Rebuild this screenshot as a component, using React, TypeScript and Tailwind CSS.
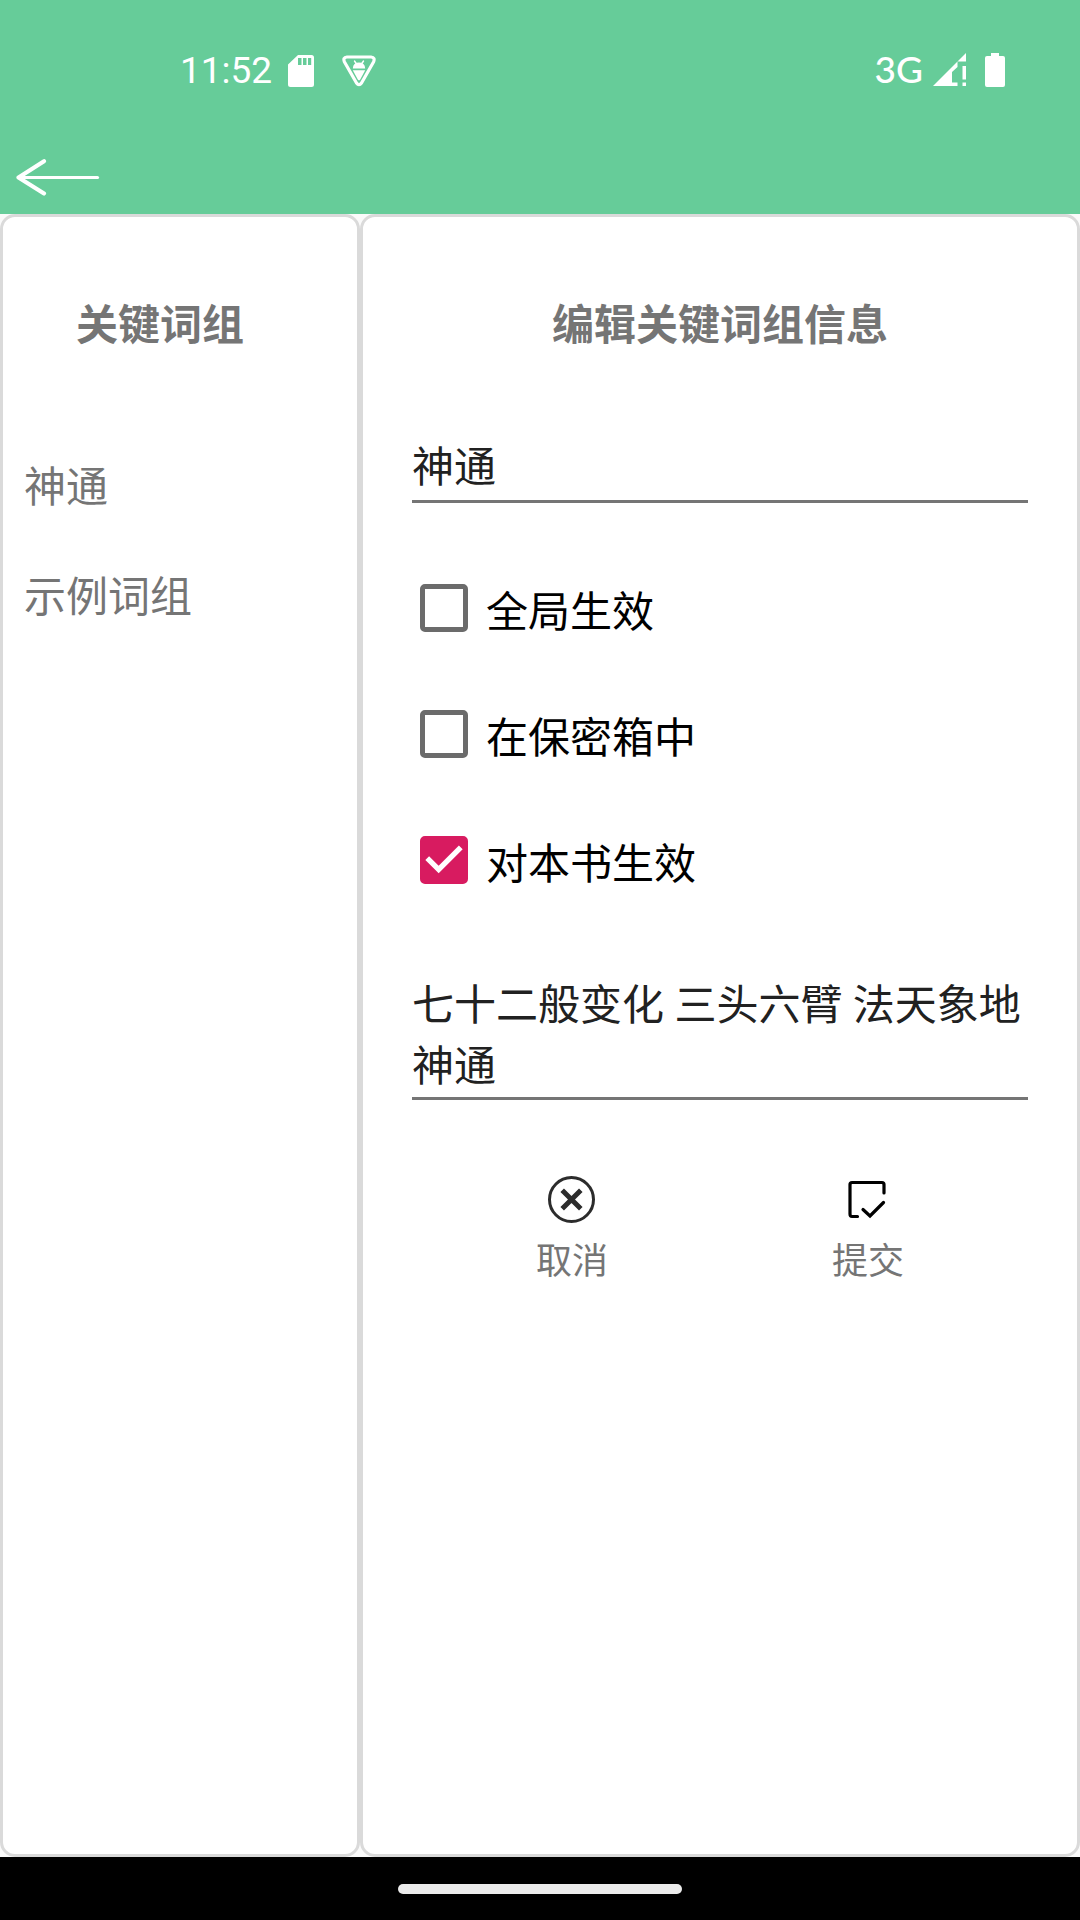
import { useState } from "react";

interface CheckRowProps {
    id: string;
    label: string;
    checked: boolean;
    onChange: (checked: boolean) => void;
}

function SdCardIcon() {
    return (
        <svg width="26" height="32" viewBox="0 0 26 32" fill="white" aria-hidden="true">
            <path
                fillRule="evenodd"
                d="M10 0H23.5A2.5 2.5 0 0 1 26 2.5V29.5A2.5 2.5 0 0 1 23.5 32H2.5A2.5 2.5 0 0 1 0 29.5V9.5ZM10 3V10H13.5V3ZM15 3V10H18.5V3ZM20 3V10H23.2V3Z"
            />
        </svg>
    );
}

function DebugIcon() {
    return (
        <svg width="34" height="32" viewBox="0 0 34 32" fill="none" aria-hidden="true">
            <path
                d="M5 2H29Q33.5 2.5 31.5 7L19.5 28Q17 31.5 14.5 28L2.5 7Q0.5 2.5 5 2Z"
                stroke="white"
                strokeWidth="3.2"
                strokeLinejoin="round"
            />
            <path
                d="M12.5 6L14.5 9M21.5 6L19.5 9"
                stroke="white"
                strokeWidth="1.4"
                strokeLinecap="round"
            />
            <path d="M10.8 13.4Q11.2 7.5 17 7.5T23.2 13.4ZM10.8 15.2H23.2L18.2 24.5Q17 26.2 15.8 24.5Z" fill="white" />
        </svg>
    );
}

function SignalIcon() {
    return (
        <svg width="34" height="34" viewBox="0 0 34 34" fill="white" aria-hidden="true">
            <path d="M33 0V8.5H24.5V14L19 19V29.5H24.5V33H0Z" />
            <path d="M29.5 13H33V26.5H29.5ZM29.5 29.5H33V33H29.5Z" />
        </svg>
    );
}

function BatteryIcon() {
    return (
        <svg width="20" height="34" viewBox="0 0 20 34" fill="white" aria-hidden="true">
            <path d="M6 0H14V3H18Q20 3 20 5V32Q20 34 18 34H2Q0 34 0 32V5Q0 3 2 3H6Z" />
        </svg>
    );
}

function BackIcon() {
    return (
        <svg width="84" height="38" viewBox="0 0 84 38" fill="none" stroke="white" strokeLinecap="round" aria-hidden="true">
            <path d="M5 19.5H81.5" strokeWidth="3.2" />
            <path d="M28 3.2L2.5 19.5L28 35.5" strokeWidth="4.2" strokeLinejoin="round" />
        </svg>
    );
}

function CancelIcon() {
    return (
        <svg width="48" height="48" viewBox="0 0 48 48" fill="none" stroke="#2c2c2c" aria-hidden="true">
            <circle cx="23.5" cy="23.5" r="22" strokeWidth="3" />
            <path d="M14.2 14.2L32.8 32.8M32.8 14.2L14.2 32.8" strokeWidth="5" />
        </svg>
    );
}

function SubmitIcon() {
    return (
        <svg width="48" height="48" viewBox="0 0 48 48" fill="none" stroke="black" strokeWidth="3.2" strokeLinecap="round" aria-hidden="true">
            <path d="M40 17V8.5Q40 6.5 38 6.5H8Q6 6.5 6 8.5V38Q6 40.5 8 40.5H13.5" />
            <path d="M19 33.5L26 40L39.5 26.5" />
        </svg>
    );
}

function CheckRow({ id, label, checked, onChange }: CheckRowProps) {
    return (
        <div className="flex items-center h-[126px] pl-2 gap-[18px]">
            <span className="grid shrink-0">
                <input
                    id={id}
                    type="checkbox"
                    checked={checked}
                    onChange={(e) => onChange(e.target.checked)}
                    className="peer col-start-1 row-start-1 appearance-none w-12 h-12 rounded-[5px] border-[5px] border-[#6b6b6b] checked:border-[#d81b60] checked:bg-[#d81b60]"
                />
                <svg
                    viewBox="3 3 18 18"
                    className="col-start-1 row-start-1 w-12 h-12 fill-white pointer-events-none invisible peer-checked:visible"
                    aria-hidden="true"
                >
                    <path d="M10 17l-5-5 1.41-1.41L10 14.17l7.59-7.59L19 8l-9 9z" />
                </svg>
            </span>
            <label htmlFor={id} className="pt-2.5 text-black">
                {label}
            </label>
        </div>
    );
}

const groups = ["神通", "示例词组"];

export default function App() {
    const [name, setName] = useState("神通");
    const [words, setWords] = useState("七十二般变化 三头六臂 法天象地 神通");
    const [isGlobal, setIsGlobal] = useState(false);
    const [inVault, setInVault] = useState(false);
    const [forBook, setForBook] = useState(true);

    return (
        <div className="min-h-screen flex flex-col bg-[#fafafa] font-[Roboto,'Noto_Sans_CJK_SC',sans-serif] text-[42px] leading-[60px] text-[#757575]">
            <header className="bg-[#66cc99] text-white">
                <div className="flex items-center justify-between h-[140px] pl-[180px] pr-[75px] text-[37px]">
                    <div className="flex items-center pt-0.5">
                        <span>11:52</span>
                        <span className="ml-4">
                            <SdCardIcon />
                        </span>
                        <span className="ml-7">
                            <DebugIcon />
                        </span>
                    </div>
                    <div className="flex items-center">
                        <span className="pb-0.5 font-medium font-[Lato,sans-serif]">3G</span>
                        <span className="ml-2.5">
                            <SignalIcon />
                        </span>
                        <span className="ml-[18px]">
                            <BatteryIcon />
                        </span>
                    </div>
                </div>
                <div className="flex items-center h-[74px] pl-4">
                    <button type="button" aria-label="返回">
                        <BackIcon />
                    </button>
                </div>
            </header>

            <main className="flex-1 flex">
                <nav className="w-1/3 bg-white border-[3px] border-[#dadada] rounded-[15px] pt-[79px]">
                    <h2 className="mr-10 text-center font-bold">关键词组</h2>
                    <ul className="mt-[77px] px-[21px]">
                        {groups.map((group) => (
                            <li key={group}>
                                <button type="button" className="w-full h-[110px] text-left">
                                    {group}
                                </button>
                            </li>
                        ))}
                    </ul>
                </nav>

                <form
                    onSubmit={(e) => e.preventDefault()}
                    className="w-2/3 bg-white border-[3px] border-[#dadada] rounded-[15px] pt-[79px] px-[49px]"
                >
                    <h2 className="text-center font-bold">编辑关键词组信息</h2>
                    <input
                        type="text"
                        aria-label="词组名称"
                        value={name}
                        onChange={(e) => setName(e.target.value)}
                        className="block w-full mt-[79px] h-[68px] pb-[8px] border-b-[3px] border-[#757575] text-[#212121] outline-none"
                    />
                    <div className="mt-[42px]">
                        <CheckRow id="global" label="全局生效" checked={isGlobal} onChange={setIsGlobal} />
                        <CheckRow id="vault" label="在保密箱中" checked={inVault} onChange={setInVault} />
                        <CheckRow id="book" label="对本书生效" checked={forBook} onChange={setForBook} />
                    </div>
                    <textarea
                        aria-label="关键词"
                        rows={2}
                        value={words}
                        onChange={(e) => setWords(e.target.value)}
                        className="block w-full mt-[52px] leading-[61px] border-b-[3px] border-[#757575] text-[#212121] resize-none outline-none overflow-hidden"
                    />
                    <div className="flex mt-[76px] px-3 text-4xl leading-[48px]">
                        <button type="button" className="flex-1 flex flex-col items-center gap-[14px]">
                            <CancelIcon />
                            取消
                        </button>
                        <button type="submit" className="flex-1 flex flex-col items-center gap-[14px]">
                            <SubmitIcon />
                            提交
                        </button>
                    </div>
                </form>
            </main>

            <footer className="flex items-center justify-center h-[63px] bg-black">
                <div className="w-[284px] h-[10px] rounded-full bg-[#ebebeb]" />
            </footer>
        </div>
    );
}
